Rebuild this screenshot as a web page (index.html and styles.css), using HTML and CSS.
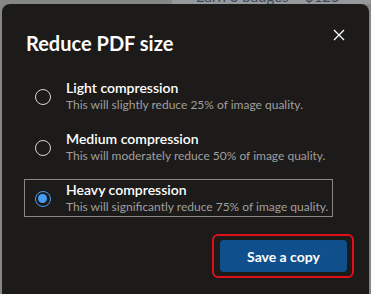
FILE: index.html
```html
<!DOCTYPE html>
<html>
<head>
<meta charset="utf-8">
<link rel="stylesheet" href="styles.css">
</head>
<body>
<div class="backdrop">
  <div class="backdrop-left"></div>
  <div class="backdrop-right"><span class="backdrop-text">Earn 3 badges = $125</span></div>
</div>
<div class="dialog">
  <div class="header">
    <h1 class="title">Reduce PDF size</h1>
    <button class="close" aria-label="Close">
      <svg width="12" height="12" viewBox="0 0 12 12"><path d="M1 1 L11 11 M11 1 L1 11" stroke="#ffffff" stroke-width="1.3" fill="none"/></svg>
    </button>
  </div>
  <div class="options">
    <label class="option">
      <span class="radio"></span>
      <span class="text">
        <span class="label">Light compression</span>
        <span class="desc">This will slightly reduce 25% of image quality.</span>
      </span>
    </label>
    <label class="option">
      <span class="radio"></span>
      <span class="text">
        <span class="label">Medium compression</span>
        <span class="desc">This will moderately reduce 50% of image quality.</span>
      </span>
    </label>
    <label class="option selected">
      <span class="radio checked"></span>
      <span class="text">
        <span class="label">Heavy compression</span>
        <span class="desc">This will significantly reduce 75% of image quality.</span>
      </span>
    </label>
  </div>
  <div class="footer">
    <div class="highlight">
      <button class="primary">Save a copy</button>
    </div>
  </div>
</div>
</body>
</html>
```

FILE: styles.css
```css
html, body {
  margin: 0;
  padding: 0;
  background: #858785;
  overflow: hidden;
  height: 294px;
}
body {
  font-family: "Lato", "Noto Sans", sans-serif;
  position: relative;
}
.backdrop {
  display: flex;
  height: 4px;
  overflow: hidden;
}
.backdrop-left {
  width: 172px;
  background: #858785;
}
.backdrop-right {
  flex: 1;
  background: #979a9c;
  overflow: hidden;
}
.backdrop-text {
  display: block;
  margin-top: -13px;
  margin-left: 24px;
  font-size: 15px;
  line-height: 18px;
  color: #3d4a5e;
  white-space: nowrap;
}
.dialog {
  margin: 0 2px 0 2px;
  height: 300px;
  background: #1c1b1a;
  border-radius: 8px 8px 0 0;
  box-sizing: border-box;
  padding: 24px 24px 0 24px;
  color: #ffffff;
}
.header {
  display: flex;
  justify-content: space-between;
  align-items: flex-start;
  height: 49px;
}
.title {
  margin: 1px 0 0 0;
  font-size: 20px;
  line-height: 28px;
  font-weight: 700;
}
.close {
  background: none;
  border: 0;
  padding: 0;
  margin: 1px 0 0 0;
  width: 12px;
  height: 12px;
  display: flex;
}
.options {
  display: flex;
  flex-direction: column;
  gap: 13px;
  width: 309px;
  margin-left: -2px;
}
.option {
  display: flex;
  align-items: center;
  height: 38px;
  box-sizing: border-box;
  border: 1px solid transparent;
  padding-left: 10px;
}
.option.selected {
  border-color: #8a8886;
}
.radio {
  width: 16px;
  height: 16px;
  box-sizing: border-box;
  border: 1.5px solid #d6d6d6;
  border-radius: 50%;
  flex: none;
  margin-right: 15px;
  margin-top: 1px;
  position: relative;
}
.radio.checked {
  border-color: #479ef5;
}
.radio.checked::after {
  content: "";
  position: absolute;
  left: 2px;
  top: 2px;
  width: 9px;
  height: 9px;
  border-radius: 50%;
  background: #479ef5;
}
.text {
  display: flex;
  flex-direction: column;
  white-space: nowrap;
}
.label {
  font-size: 14px;
  line-height: 18px;
  color: #ffffff;
  font-weight: 600;
}
.desc {
  font-size: 12px;
  line-height: 16px;
  color: #a19f9d;
}
.footer {
  display: flex;
  justify-content: flex-end;
  margin-top: 17px;
  margin-right: -9px;
}
.highlight {
  border: 2px solid #e0101a;
  border-radius: 6px;
  padding: 4px 5px 4px 6px;
}
.primary {
  width: 127px;
  height: 32px;
  background: #0f4f8b;
  color: #ffffff;
  border: 0;
  border-radius: 4px;
  font-family: "Lato", "Noto Sans", sans-serif;
  font-size: 14px;
  font-weight: 700;
  padding: 0;
  display: block;
}
```
